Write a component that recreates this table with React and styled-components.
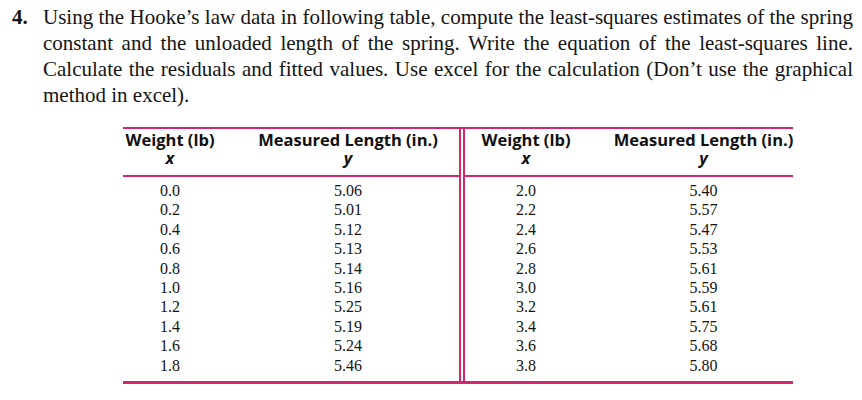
import React from 'react';
import styled, { createGlobalStyle } from 'styled-components';

const GlobalStyle = createGlobalStyle`
  body {
    margin: 0;
    background: #ffffff;
    color: #141414;
  }
`;

const PINK = '#d3286f';

const Page = styled.div`
  display: flex;
  flex-direction: column;
  width: 862px;
  height: 400px;
  overflow: hidden;
`;

const Problem = styled.div`
  display: flex;
  padding: 4px 9px 0 12px;
  font-family: "Liberation Serif", "Times New Roman", serif;
  font-size: 21px;
  line-height: 26px;
`;

const Num = styled.span`
  flex: 0 0 31px;
  font-weight: bold;
`;

const Text = styled.p`
  flex: 1;
  margin: 0;
  text-align: justify;
`;

const Table = styled.div`
  display: flex;
  width: 670px;
  margin: 19px 0 0 123px;
  border-top: 2px solid ${PINK};
  border-bottom: 3px solid ${PINK};
`;

const Half = styled.div`
  display: flex;
  flex-direction: column;
  width: ${(p) => p.$width}px;
  box-sizing: border-box;
  border-left: ${(p) => (p.$divided ? `6px double ${PINK}` : 'none')};
`;

const Head = styled.div`
  display: grid;
  grid-template-columns: ${(p) => p.$cols};
  padding: 1px 0 8px;
  border-bottom: 2px solid ${PINK};
  font-family: "Open Sans", "Liberation Sans", sans-serif;
  font-weight: 700;
  font-size: 16.5px;
  color: #111;
`;

const Body = styled.div`
  display: grid;
  grid-template-columns: ${(p) => p.$cols};
  padding: 4px 0 6px;
  font-family: "Liberation Serif", "Times New Roman", serif;
  font-size: 16px;
  line-height: 19.4px;
`;

const Col = styled.div`
  display: flex;
  flex-direction: column;
  align-items: center;
  padding-left: ${(p) => p.$indent || 0}px;
`;

const Label = styled.div`
  line-height: 19px;
  white-space: nowrap;
`;

const Var = styled.div`
  line-height: 18px;
  font-style: italic;
  font-weight: 700;
`;

const left = {
  x: ['0.0', '0.2', '0.4', '0.6', '0.8', '1.0', '1.2', '1.4', '1.6', '1.8'],
  y: ['5.06', '5.01', '5.12', '5.13', '5.14', '5.16', '5.25', '5.19', '5.24', '5.46'],
};

const right = {
  x: ['2.0', '2.2', '2.4', '2.6', '2.8', '3.0', '3.2', '3.4', '3.6', '3.8'],
  y: ['5.40', '5.57', '5.47', '5.53', '5.61', '5.59', '5.61', '5.75', '5.68', '5.80'],
};

const DataHalf = ({ data, cols, indent, width, divided }) => (
  <Half $width={width} $divided={divided}>
    <Head $cols={cols}>
      <Col>
        <Label>Weight (lb)</Label>
        <Var>x</Var>
      </Col>
      <Col $indent={indent}>
        <Label>Measured Length (in.)</Label>
        <Var>y</Var>
      </Col>
    </Head>
    <Body $cols={cols}>
      <Col>
        {data.x.map((v, i) => (
          <div key={i}>{v}</div>
        ))}
      </Col>
      <Col $indent={indent}>
        {data.y.map((v, i) => (
          <div key={i}>{v}</div>
        ))}
      </Col>
    </Body>
  </Half>
);

export default function App() {
  return (
    <Page>
      <GlobalStyle />
      <Problem>
        <Num>4.</Num>
        <Text>
          Using the Hooke’s law data in following table, compute the least-squares estimates of the spring
          constant and the unloaded length of the spring. Write the equation of the least-squares line.
          Calculate the residuals and fitted values. Use excel for the calculation (Don’t use the graphical
          method in excel).
        </Text>
      </Problem>
      <Table>
        <DataHalf data={left} cols="94px 242px" indent={20} width={336} />
        <DataHalf data={right} cols="122px 206px" indent={27} width={334} divided />
      </Table>
    </Page>
  );
}
